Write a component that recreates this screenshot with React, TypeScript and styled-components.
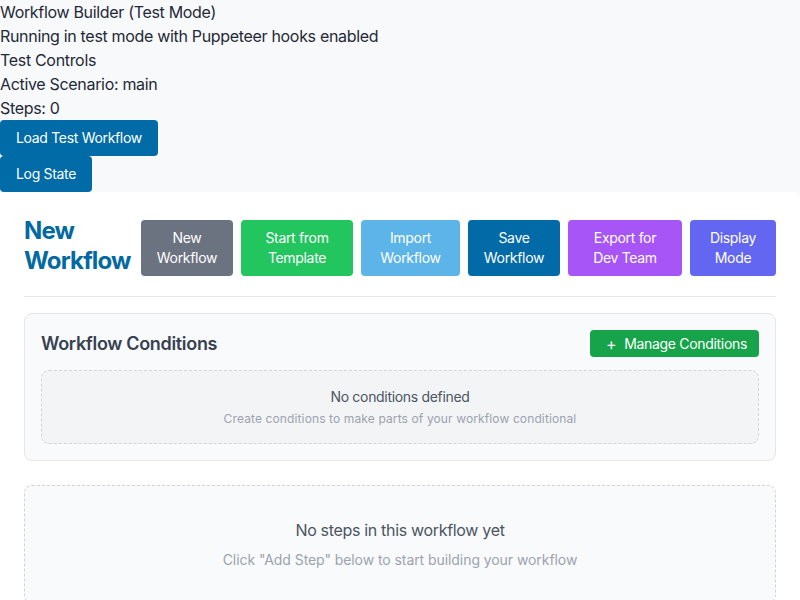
import React from "react";
import styled, { createGlobalStyle } from "styled-components";

const GlobalStyle = createGlobalStyle`
  html, body {
    margin: 0;
    padding: 0;
    background: #f8f9fb;
    font-family: Inter, "Noto Sans", "Liberation Sans", sans-serif;
    letter-spacing: -0.02em;
    color: #1f2937;
  }
  * { box-sizing: border-box; }
  button { letter-spacing: inherit; }
`;

const TestPanel = styled.div`
  font-size: 16px;
  line-height: 24px;
  color: #1f2937;
`;

const TestLine = styled.div``;

const TestButton = styled.button`
  display: block;
  margin: 0;
  border: none;
  border-radius: 4px;
  background: #006ba6;
  color: #ffffff;
  font-family: inherit;
  font-size: 14px;
  line-height: 20px;
  padding: 8px 16px;
  height: 36px;
  cursor: pointer;
`;

const Card = styled.div`
  background: #ffffff;
  border-radius: 0 8px 0 0;
  padding: 24px;
  min-height: 408px;
`;

const Header = styled.div`
  display: flex;
  align-items: flex-end;
  justify-content: space-between;
  padding-bottom: 20px;
  border-bottom: 1px solid #e5e7eb;
`;

const Title = styled.h1`
  margin: 0;
  font-size: 24px;
  line-height: 30px;
  font-weight: 700;
  letter-spacing: -0.035em;
  color: #0369a1;
  width: 110px;
`;

const Actions = styled.div`
  display: flex;
  gap: 8px;
`;

const ActionButton = styled.button<{ $bg: string; $w: number }>`
  width: ${(p) => p.$w}px;
  height: 56px;
  border: none;
  border-radius: 4px;
  background: ${(p) => p.$bg};
  color: #ffffff;
  font-family: inherit;
  font-size: 14px;
  line-height: 20px;
  padding: 8px 10px;
  text-align: center;
  cursor: pointer;
`;

const ConditionsCard = styled.section`
  margin-top: 16px;
  background: #f9fafb;
  border: 1px solid #e5e7eb;
  border-radius: 8px;
  padding: 16px;
`;

const ConditionsHeader = styled.div`
  display: flex;
  align-items: center;
  justify-content: space-between;
  height: 27px;
  margin-bottom: 13px;
`;

const SectionTitle = styled.h2`
  margin: 0;
  font-size: 18px;
  line-height: 28px;
  font-weight: 600;
  color: #374151;
`;

const ManageButton = styled.button`
  height: 27px;
  border: none;
  border-radius: 4px;
  background: #16a34a;
  color: #ffffff;
  font-family: inherit;
  font-size: 14px;
  line-height: 20px;
  padding: 0 12px 0 16px;
  display: flex;
  align-items: center;
  gap: 8px;
  cursor: pointer;
`;

const Plus = styled.span`
  font-size: 16px;
`;

const EmptyBox = styled.div<{ $bg: string; $pad: number }>`
  border: 1px dashed #d1d5db;
  border-radius: 8px;
  background: ${(p) => p.$bg};
  padding: ${(p) => p.$pad}px 16px;
  text-align: center;
`;

const EmptyTitle = styled.div<{ $size: number; $lh: number }>`
  font-size: ${(p) => p.$size}px;
  line-height: ${(p) => p.$lh}px;
  color: #4b5563;
`;

const EmptyHint = styled.div<{ $size: number; $lh: number; $mt: number; $ls: string }>`
  margin-top: ${(p) => p.$mt}px;
  font-size: ${(p) => p.$size}px;
  line-height: ${(p) => p.$lh}px;
  letter-spacing: ${(p) => p.$ls};
  color: #9ca3af;
`;

const StepsArea = styled.div`
  margin-top: 24px;
`;

const actions = [
  { label: ["New", "Workflow"], bg: "#6b7280", w: 92 },
  { label: ["Start from", "Template"], bg: "#22c55e", w: 112 },
  { label: ["Import", "Workflow"], bg: "#5db4e8", w: 99 },
  { label: ["Save", "Workflow"], bg: "#026aa7", w: 92 },
  { label: ["Export for", "Dev Team"], bg: "#a855f7", w: 114 },
  { label: ["Display", "Mode"], bg: "#6366f1", w: 86 },
];

export default function App() {
  return (
    <>
      <GlobalStyle />
      <TestPanel>
        <TestLine>Workflow Builder (Test Mode)</TestLine>
        <TestLine>Running in test mode with Puppeteer hooks enabled</TestLine>
        <TestLine>Test Controls</TestLine>
        <TestLine>Active Scenario: main</TestLine>
        <TestLine>Steps: 0</TestLine>
        <TestButton>Load Test Workflow</TestButton>
        <TestButton>Log State</TestButton>
      </TestPanel>
      <Card>
        <Header>
          <Title>New Workflow</Title>
          <Actions>
            {actions.map((a) => (
              <ActionButton key={a.label.join(" ")} $bg={a.bg} $w={a.w}>
                {a.label[0]}
                <br />
                {a.label[1]}
              </ActionButton>
            ))}
          </Actions>
        </Header>
        <ConditionsCard>
          <ConditionsHeader>
            <SectionTitle>Workflow Conditions</SectionTitle>
            <ManageButton>
              <Plus>+</Plus>
              <span>Manage Conditions</span>
            </ManageButton>
          </ConditionsHeader>
          <EmptyBox $bg="#f3f4f6" $pad={16}>
            <EmptyTitle $size={14} $lh={20}>No conditions defined</EmptyTitle>
            <EmptyHint $size={12} $lh={16} $mt={4} $ls="0.01em">
              Create conditions to make parts of your workflow conditional
            </EmptyHint>
          </EmptyBox>
        </ConditionsCard>
        <StepsArea>
          <EmptyBox $bg="#f9fafb" $pad={32}>
            <EmptyTitle $size={16} $lh={24}>No steps in this workflow yet</EmptyTitle>
            <EmptyHint $size={14} $lh={20} $mt={8} $ls="-0.005em">
              Click "Add Step" below to start building your workflow
            </EmptyHint>
          </EmptyBox>
        </StepsArea>
      </Card>
    </>
  );
}
